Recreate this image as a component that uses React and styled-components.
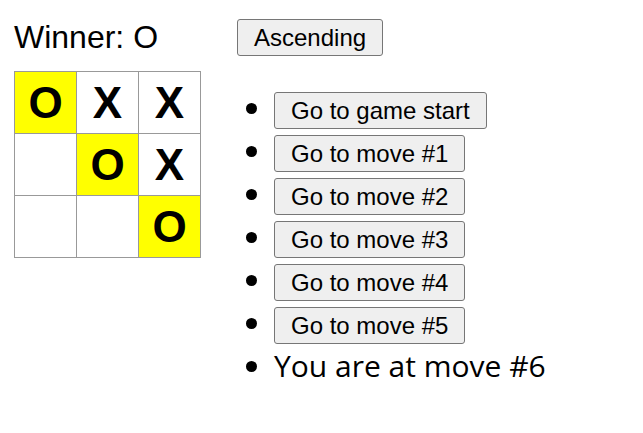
import styled, { createGlobalStyle } from "styled-components";

const GlobalStyle = createGlobalStyle`
    body {
        margin: 0;
        background: #fff;
        color: #000;
        font-family: "Open Sans", "Liberation Sans", sans-serif;
    }
`;

const Game = styled.div`
    display: flex;
    align-items: flex-start;
    gap: 36px;
    padding: 19px 14px;
`;

const GameBoard = styled.div`
    display: flex;
    flex-direction: column;
`;

const Status = styled.div`
    font-family: "Liberation Sans", Arial, sans-serif;
    font-size: 32px;
    line-height: 36px;
    height: 36px;
    margin-bottom: 16px;
`;

const Board = styled.div`
    display: grid;
    grid-template-columns: repeat(3, 62px);
    grid-auto-rows: 62px;
    border-top: 1px solid #999;
    border-left: 1px solid #999;
    width: max-content;
`;

const Square = styled.button`
    box-sizing: border-box;
    margin: 0;
    padding: 0;
    border: none;
    border-right: 1px solid #999;
    border-bottom: 1px solid #999;
    border-radius: 0;
    background: ${p => (p.$win ? "#ffff00" : "#fff")};
    font-family: "Liberation Sans", Arial, sans-serif;
    font-weight: bold;
    font-size: 44px;
    line-height: 62px;
    color: #000;
    text-align: center;
`;

const GameInfo = styled.div`
    display: flex;
    flex-direction: column;
    align-items: flex-start;
`;

const Button = styled.button`
    box-sizing: border-box;
    height: 37px;
    margin: 0;
    padding: 0 16px;
    background: #efefef;
    border: 1px solid #767676;
    border-radius: 3px;
    font-family: "Liberation Sans", Arial, sans-serif;
    font-size: 24px;
    color: #000;
    vertical-align: middle;
`;

const Moves = styled.ul`
    margin: 33px 0 0;
    padding-left: 37px;
`;

const Move = styled.li`
    font-size: 30px;
    line-height: 37px;
    height: 37px;
    margin-bottom: 6px;
`;

const squares = ["O", "X", "X", null, "O", "X", null, null, "O"];
const winLine = [0, 4, 8];

export default function App() {
    const moves = [0, 1, 2, 3, 4, 5];
    return (
        <>
            <GlobalStyle />
            <Game>
                <GameBoard>
                    <Status>Winner: O</Status>
                    <Board>
                        {squares.map((v, i) => (
                            <Square key={i} $win={winLine.includes(i)}>{v}</Square>
                        ))}
                    </Board>
                </GameBoard>
                <GameInfo>
                    <Button>Ascending</Button>
                    <Moves>
                        {moves.map(m => (
                            <Move key={m}>
                                <Button>{m === 0 ? "Go to game start" : "Go to move #" + m}</Button>
                            </Move>
                        ))}
                        <Move>You are at move #6</Move>
                    </Moves>
                </GameInfo>
            </Game>
        </>
    );
}
